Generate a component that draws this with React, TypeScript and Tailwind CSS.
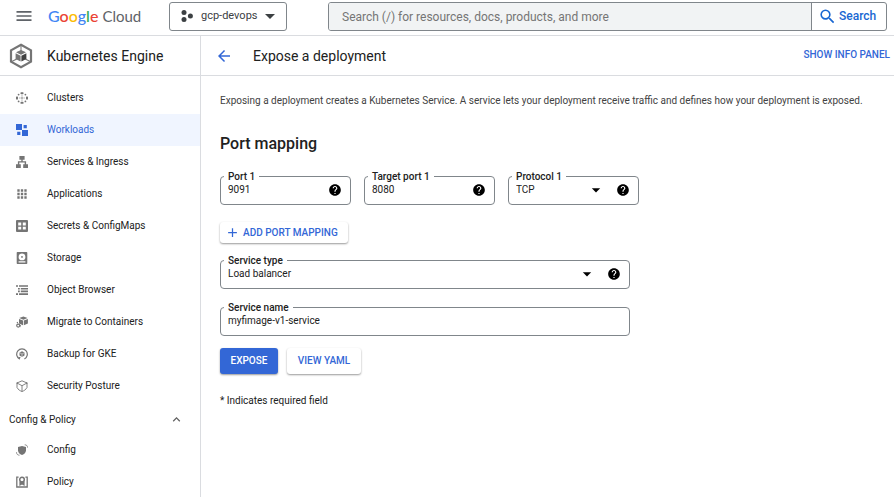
import { useId } from "react";
import type { ReactNode } from "react";
import { MdAdd, MdApps, MdArrowBack, MdArrowDropDown, MdExpandLess, MdHelp, MdMenu, MdSearch } from "react-icons/md";

function Glyph({ children, className = "h-3 w-3" }: { children: ReactNode; className?: string }) {
  return (
    <svg viewBox="0 0 12 12" className={`shrink-0 ${className}`} fill="currentColor" aria-hidden="true">
      {children}
    </svg>
  );
}

const ClustersIcon = () => (
  <Glyph>
    <path d="M5.300 5.300h1.400v1.400H5.300zM6 3.300l.9.900h-1.800zM6 8.700l.9-.9h-1.800zM3.300 6l.9-.9v1.800zM8.700 6l-.9-.9v1.800z" />
    <rect x="4.5" y="0.2" width="3" height="2" rx="0.6" />
    <rect x="4.5" y="9.8" width="3" height="2" rx="0.6" />
    <rect x="0" y="4.5" width="2" height="3" rx="0.6" />
    <rect x="10" y="4.5" width="2" height="3" rx="0.6" />
    <circle cx="2.6" cy="2.6" r="0.9" />
    <circle cx="9.4" cy="2.6" r="0.9" />
    <circle cx="2.6" cy="9.4" r="0.9" />
    <circle cx="9.4" cy="9.4" r="0.9" />
  </Glyph>
);

const WorkloadsIcon = () => (
  <Glyph>
    <path d="M0 0h6v6H0zM6 6h6v6H6zM7.6 1h3.2v3.2H7.6zM1.2 7.8h3.2V11H1.2z" />
  </Glyph>
);

const ServicesIcon = () => (
  <Glyph>
    <path d="M3.4 0h5.200v3.800H6.700v1.400h3.400v3H12V12H7.200V8.200h1.500v-1.600H3.300v1.600h1.500V12H0V8.200h1.900v-3h3.400V3.800H3.400z" />
  </Glyph>
);

const SecretsIcon = () => (
  <Glyph>
    <path
      fillRule="evenodd"
      d="M1 0h10a1 1 0 0 1 1 1v10a1 1 0 0 1-1 1H1a1 1 0 0 1-1-1V1a1 1 0 0 1 1-1zM2.2 2.6v2.8h3V2.6zM6.8 2.6v2.8h3V2.6zM2.2 6.8v2.8h3V6.8zM6.8 6.8v2.8h3V6.8z"
    />
  </Glyph>
);

const StorageIcon = () => (
  <Glyph>
    <path
      fillRule="evenodd"
      d="M1.4 0h9.2a.7.7 0 0 1 .7.7v10.6a.7.7 0 0 1-.7.7H1.4a.7.7 0 0 1-.7-.7V.7a.7.7 0 0 1 .7-.7zM6 1.5a3.4 3.4 0 1 0 0 6.8 3.4 3.4 0 0 0 0-6.8zM2.6 9.3v1.2h6.8V9.3z"
    />
    <circle cx="6" cy="4.9" r="0.9" />
  </Glyph>
);

const ObjectsIcon = () => (
  <Glyph>
    <path d="M0 1.2h2v1.600H0zM3 1.2h9v1.600H3zM2 3.900h1.800v1.600H2zM4.800 3.900H12v1.600H4.800zM2 6.600h1.800v1.600H2zM4.800 6.600H12v1.600H4.800zM0 9.300h2v1.600H0zM3 9.300h9v1.600H3z" />
  </Glyph>
);

const MigrateIcon = () => (
  <Glyph>
    <path d="M7.4 0.4 11.6 2 7.4 3.7 3.2 2zM3 2.9l4 1.6v4.7L3 7.5zM11.9 2.9l-4.1 1.6v4.7l4.1-1.7z" />
    <circle cx="2.2" cy="9.6" r="1.5" fill="none" stroke="currentColor" strokeWidth="1.2" />
    <path d="M3.2 8l1.8 1.4-1 2zM0.4 6.6l1.6-.8v2z" />
  </Glyph>
);

const BackupIcon = () => (
  <Glyph>
    <path d="M3.600 11A5.300 5.300 0 1 1 8.400 11" fill="none" stroke="currentColor" strokeWidth="1.200" />
    <path d="M6 3.2 8.5 4.6v3L6 9.1 3.5 7.6v-3z" />
    <path d="M6 6v3M6 6 3.6 4.7M6 6l2.4-1.3" stroke="white" strokeWidth="0.5" />
    <path d="M2 8.8 4.6 9.2 3.4 11.7z" />
  </Glyph>
);

const PostureIcon = () => (
  <Glyph>
    <path
      d="M6 .8 11 3v4.5c-1 2-3 3.300-5 4-2-.7-4-2-5-4V3zM1 3l5 2.700L11 3M6 5.700v5.800"
      fill="none"
      stroke="currentColor"
      strokeWidth="0.9"
    />
    <circle cx="1.200" cy="3" r="0.800" />
    <circle cx="10.800" cy="3" r="0.800" />
  </Glyph>
);

const ConfigIcon = () => (
  <Glyph>
    <path d="M6 1.900 10 3.100v3.200c0 2.200-1.600 3.900-4 4.700-2.400-.8-4-2.500-4-4.700V3.100z" />
    <path d="M8.700.8c1.800 0 3 1 2.800 2.800M.5 8.200c0 2 1.200 3 3 3" fill="none" stroke="currentColor" strokeWidth="0.800" />
  </Glyph>
);

const PolicyIcon = () => (
  <Glyph>
    <path d="M2.600 1.200H.800v9.800h10.400V1.200H9.400" fill="none" stroke="currentColor" strokeWidth="1.300" />
    <circle cx="6" cy="3.600" r="2.300" fill="none" stroke="currentColor" strokeWidth="1.500" />
    <path d="M3.400 5.200h1.800l.8.800.8-.8h1.800v4.900L6 8.400 3.400 10.100z" />
  </Glyph>
);

function NavItem({ icon, label, active = false }: { icon: ReactNode; label: string; active?: boolean }) {
  return (
    <li>
      <a
        href="#"
        aria-current={active ? "page" : undefined}
        className={`flex h-8 items-center pl-4 ${active ? "bg-[#f0f5ff] text-[#3367d6]" : "text-[#212121]"}`}
      >
        <span className={`flex w-[31px] ${active ? "text-[#3367d6]" : "text-[#757575]"}`}>{icon}</span>
        {label}
      </a>
    </li>
  );
}

function Frame({ id, label, help = true, className, children }: { id: string; label: string; help?: boolean; className: string; children: ReactNode }) {
  return (
    <div className={`relative flex h-[29px] items-center rounded-[4px] border border-[#80868b] pr-2 pb-[2px] ${className}`}>
      <label htmlFor={id} className="absolute -top-[7px] left-[3px] bg-white px-1 text-[10px] leading-[14px] font-medium text-[#212121]">
        {label}
      </label>
      {children}
      {help && (
        <button type="button" aria-label={`Help for ${label}`} className="text-black">
          <MdHelp size={14} />
        </button>
      )}
    </div>
  );
}

function TextField({ label, value, help, className }: { label: string; value: string; help?: boolean; className: string }) {
  const id = useId();
  return (
    <Frame id={id} label={label} help={help} className={className}>
      <input id={id} defaultValue={value} className="min-w-0 flex-1 bg-transparent pl-[7px] text-[10px] leading-4 text-[#212121] outline-none" />
    </Frame>
  );
}

function SelectField({ label, options, className }: { label: string; options: string[]; className: string }) {
  const id = useId();
  return (
    <Frame id={id} label={label} className={className}>
      <select id={id} className="min-w-0 flex-1 appearance-none bg-transparent pl-[7px] text-[10px] leading-4 text-[#212121] outline-none">
        {options.map((o) => (
          <option key={o}>{o}</option>
        ))}
      </select>
      <MdArrowDropDown size={20} className="pointer-events-none mr-[10px] text-black" />
    </Frame>
  );
}

function Header() {
  return (
    <header className="flex h-9 items-center border-b border-[#dadce0] pr-[7px] pb-[3px] pl-[14px]">
      <button type="button" aria-label="Main menu" className="text-[#5f6368]">
        <MdMenu size={20} />
      </button>
      <a href="#" className="ml-[14px] flex w-[93px] items-baseline gap-1 font-['Lato',sans-serif] leading-5 whitespace-nowrap text-[#5f6368]">
        <span className="text-[16px] font-medium">
          <span className="text-[#4285f4]">G</span>
          <span className="text-[#ea4335]">o</span>
          <span className="text-[#fbbc04]">o</span>
          <span className="text-[#4285f4]">g</span>
          <span className="text-[#34a853]">l</span>
          <span className="text-[#ea4335]">e</span>
        </span>
        <span className="text-[15px]">Cloud</span>
      </a>
      <button type="button" className="ml-7 flex h-[29px] w-[118px] items-center rounded-[3px] border border-[#80868b] pr-1 pl-[11px] text-[11px] whitespace-nowrap text-[#3c4043]">
        <Glyph>
          <g fill="#3c4043">
            <circle cx="3" cy="2.600" r="2.500" />
            <circle cx="3" cy="9.400" r="2.500" />
            <circle cx="9.400" cy="6" r="2.500" />
          </g>
        </Glyph>
        <span className="ml-2 flex-1 text-left">gcp-devops</span>
        <MdArrowDropDown size={24} className="-ml-2 shrink-0 text-[#3c4043]" />
      </button>
      <form className="ml-[41px] flex h-[29px] flex-1 overflow-hidden rounded-[3px] border border-[#80868b]">
        <input
          type="search"
          aria-label="Search"
          placeholder="Search (/) for resources, docs, products, and more"
          className="min-w-0 flex-1 bg-[#f1f3f4] pt-px pl-[13px] text-[12px] outline-none placeholder:text-[#757575]"
        />
        <button type="button" className="flex w-[75px] items-center border-l border-[#80868b] pl-[6px] text-[12px] font-medium text-[#1967d2]">
          <MdSearch size={19} />
          <span className="ml-[2px]">Search</span>
        </button>
      </form>
    </header>
  );
}

function Sidebar() {
  return (
    <nav className="w-[201px] shrink-0 border-r border-[#dadce0] text-[10px] leading-4">
      <div className="flex h-10 items-center border-b border-[#dadce0] pl-[9px]">
        <svg viewBox="0 0 24 26" className="h-[26px] w-6 text-[#757575]" fill="currentColor" aria-hidden="true">
          <path d="M12 1.700 22 7.300v11.400l-10 5.600-10-5.600V7.300z" fill="none" stroke="currentColor" strokeWidth="2.200" />
          <path d="M11.500 2h1v6h-1zM2.500 18l5-2.500.5 1-5 2.500zM21.500 18l-5-2.500-.5 1 5 2.500z" />
          <path d="M12 7l5 2.300-5 2.400-5-2.400zM6.600 10.300l5 2.400v5.900l-5-2.500z" />
          <path d="M17.400 10.300l-5 2.400v5.900l5-2.500z" fill="#424242" />
        </svg>
        <span className="ml-[14px] text-[14px] leading-5 text-[#212121]">Kubernetes Engine</span>
      </div>
      <ul className="pt-[6px]">
        <NavItem icon={<ClustersIcon />} label="Clusters" />
        <NavItem icon={<WorkloadsIcon />} label="Workloads" active />
        <NavItem icon={<ServicesIcon />} label="Services & Ingress" />
        <NavItem icon={<MdApps size={14} className="-mx-px" />} label="Applications" />
        <NavItem icon={<SecretsIcon />} label="Secrets & ConfigMaps" />
        <NavItem icon={<StorageIcon />} label="Storage" />
        <NavItem icon={<ObjectsIcon />} label="Object Browser" />
        <NavItem icon={<MigrateIcon />} label="Migrate to Containers" />
        <NavItem icon={<BackupIcon />} label="Backup for GKE" />
        <NavItem icon={<PostureIcon />} label="Security Posture" />
      </ul>
      <button type="button" className="flex h-8 w-full items-center justify-between pt-[3px] pr-4 pl-[9px] text-[#212121]">
        Config &amp; Policy
        <MdExpandLess size={15} className="text-[#616161]" />
      </button>
      <ul>
        <NavItem icon={<ConfigIcon />} label="Config" />
        <NavItem icon={<PolicyIcon />} label="Policy" />
      </ul>
    </nav>
  );
}

export default function App() {
  return (
    <div className="flex h-screen flex-col overflow-hidden bg-white font-['Roboto',sans-serif] text-[#212121]">
      <Header />
      <div className="flex min-h-0 flex-1">
        <Sidebar />
        <main className="min-w-0 flex-1">
          <div className="flex h-10 items-center border-b border-[#dadce0] pr-1 pl-[14px]">
            <a href="#" aria-label="Back" className="text-[#3367d6]">
              <MdArrowBack size={18} />
            </a>
            <h1 className="ml-5 flex-1 text-[14px] leading-5">Expose a deployment</h1>
            <button type="button" className="pb-px text-[10px] leading-4 font-medium text-[#3367d6]">
              SHOW INFO PANEL
            </button>
          </div>
          <form className="flex flex-col items-start pt-[18px] pl-[19px]">
            <p className="text-[10px] leading-[14px] text-[#424242]">
              Exposing a deployment creates a Kubernetes Service. A service lets your deployment receive traffic and defines how your deployment is exposed.
            </p>
            <h2 className="mt-[26px] text-[16px] leading-5 font-medium">Port mapping</h2>
            <div className="mt-[22px] flex gap-[13px]">
              <TextField label="Port 1" value="9091" className="w-[131px]" />
              <TextField label="Target port 1" value="8080" className="w-[131px]" />
              <SelectField label="Protocol 1" options={["TCP", "UDP"]} className="w-[131px]" />
            </div>
            <button
              type="button"
              className="mt-[17px] flex h-[21px] w-[128px] items-center gap-[3px] rounded-[3px] pl-[5px] text-[10px] font-medium whitespace-nowrap text-[#3367d6] shadow-[0_1px_2px_rgba(0,0,0,0.4)]"
            >
              <MdAdd size={15} />
              ADD PORT MAPPING
            </button>
            <SelectField label="Service type" options={["Load balancer", "Cluster IP", "Node port"]} className="mt-[17px] w-[410px]" />
            <TextField label="Service name" value="myfimage-v1-service" help={false} className="mt-[18px] w-[410px]" />
            <div className="mt-3 flex gap-[9px] text-[10px] leading-4 font-medium">
              <button type="button" className="h-[26px] w-[58px] rounded-[3px] bg-[#3367d6] text-white shadow-[0_1px_2px_rgba(0,0,0,0.4)]">
                EXPOSE
              </button>
              <button type="button" className="h-[26px] w-[74px] rounded-[3px] text-[#3367d6] shadow-[0_1px_2px_rgba(0,0,0,0.4)]">
                VIEW YAML
              </button>
            </div>
            <p className="mt-5 text-[10px] leading-[14px]">* Indicates required field</p>
          </form>
        </main>
      </div>
    </div>
  );
}
